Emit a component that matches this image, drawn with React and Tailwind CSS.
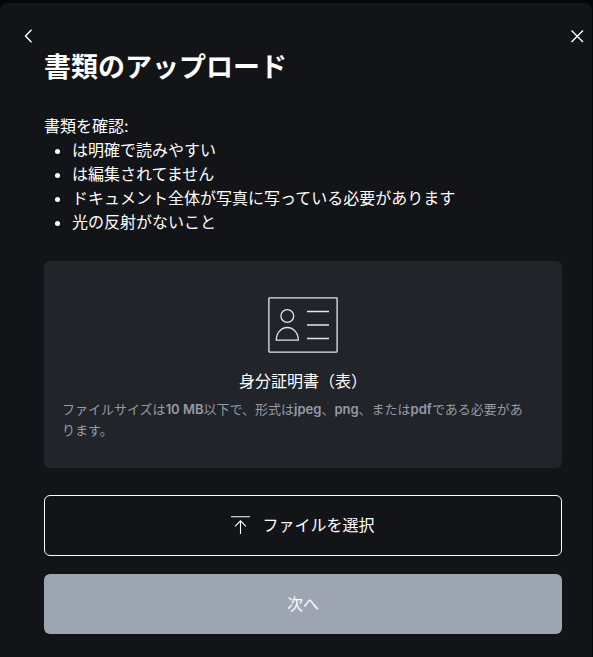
import { useRef } from 'react';

const REQUIREMENTS = [
  'は明確で読みやすい',
  'は編集されてません',
  'ドキュメント全体が写真に写っている必要があります',
  '光の反射がないこと',
];

function BackIcon() {
  return (
    <svg width="8" height="14" viewBox="0 0 8 14" fill="none" stroke="currentColor" strokeWidth="1.4" aria-hidden="true">
      <path d="M7.5 0.8 1.500 7l6 6.200" />
    </svg>
  );
}

function CloseIcon() {
  return (
    <svg width="14" height="14" viewBox="0 0 14 14" fill="none" stroke="currentColor" strokeWidth="1.4" aria-hidden="true">
      <path d="M1.500 1.500l11.500 11.500M13 1.500 1.500 13" />
    </svg>
  );
}

function IdCardIcon() {
  return (
    <svg width="70" height="56" viewBox="0 0 70 56" fill="none" stroke="#e4e6ea" strokeWidth="1.3" aria-hidden="true">
      <rect x="0.9" y="0.9" width="68.2" height="54.2" rx="0.5" />
      <circle cx="19.3" cy="19" r="6.4" />
      <path d="M8.3 43.200c0-7.400 4.900-12.700 11-12.700s11 5.300 11 12.700z" />
      <path d="M39 14.500h22M39 28h22M39 41.500h22" />
    </svg>
  );
}

function UploadIcon() {
  return (
    <svg width="19" height="18" viewBox="0 0 19 18" fill="none" stroke="currentColor" strokeWidth="1.1" aria-hidden="true">
      <path d="M0 0.700h19M9.500 18V5M4 10.300l5.500-5.500 5.500 5.500" />
    </svg>
  );
}

export default function App() {
  const fileInput = useRef(null);

  return (
    <div className="min-h-screen bg-[#050608] pt-[3px] pr-px font-['Inter','Noto_Sans_CJK_JP',sans-serif] text-white">
      <main className="min-h-[calc(100vh-3px)] rounded-t-lg bg-[#131418] pb-6">
        <div className="flex items-center justify-between pt-[26px] pr-2 pl-6">
          <button type="button" aria-label="戻る" className="flex">
            <BackIcon />
          </button>
          <button type="button" aria-label="閉じる" className="flex">
            <CloseIcon />
          </button>
        </div>

        <div className="pr-[30px] pl-11">
          <h1 className="mt-[5px] text-[27px] leading-10 font-bold">書類のアップロード</h1>

          <div className="mt-[26px] text-base leading-6">
            <p>書類を確認:</p>
            <ul className="list-disc pl-7">
              {REQUIREMENTS.map((item) => (
                <li key={item}>{item}</li>
              ))}
            </ul>
          </div>

          <section className="mt-[27px] flex flex-col items-center rounded-md bg-[#212429] px-[18px] pt-9 pb-[27px]">
            <IdCardIcon />
            <h2 className="mt-4 text-base leading-6">身分証明書（表）</h2>
            <p className="mt-1.5 w-full pr-2.5 text-[13px] leading-[21px] text-[#969ba5]">
              ファイルサイズは<b className="font-semibold">10 MB</b>以下で、形式は
              <b className="font-semibold">jpeg</b>、<b className="font-semibold">png</b>、または
              <b className="font-semibold">pdf</b>である必要があります。
            </p>
          </section>

          <input ref={fileInput} type="file" accept=".jpeg,.png,.pdf" aria-label="ファイルを選択" className="hidden" />
          <button
            type="button"
            onClick={() => fileInput.current.click()}
            className="mt-[27px] flex h-[61px] w-full items-center justify-center gap-3 rounded-md border border-white pb-0.5 text-base"
          >
            <UploadIcon />
            ファイルを選択
          </button>
          <button type="button" className="mt-[18px] h-[60px] w-full rounded-md bg-[#9da5b3] text-base">
            次へ
          </button>
        </div>
      </main>
    </div>
  );
}
